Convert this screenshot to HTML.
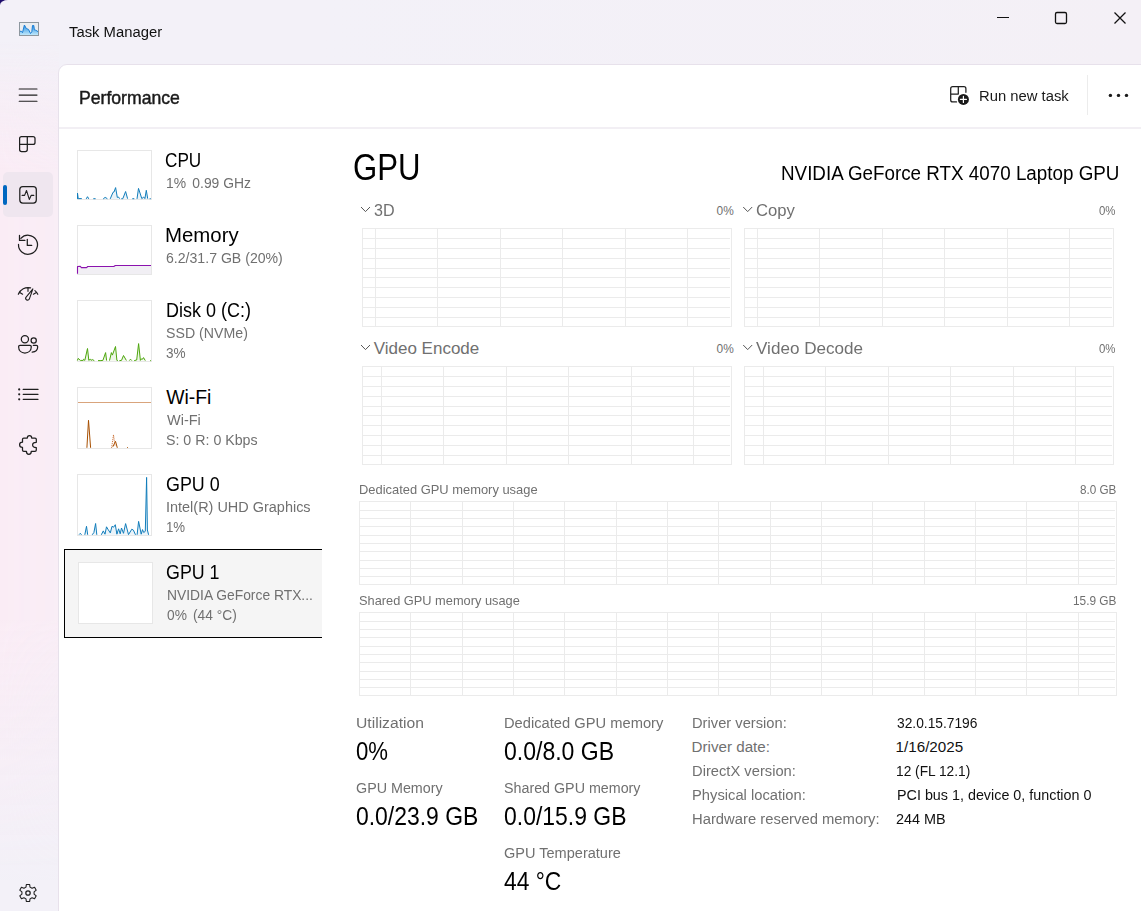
<!DOCTYPE html>
<html lang="en">
<head>
<meta charset="utf-8">
<title>Task Manager</title>
<style>
html,body{margin:0;padding:0}
body{width:1141px;height:911px;overflow:hidden;position:relative;background:#1d0b6b;font-family:'Liberation Sans',sans-serif}
#win{position:absolute;left:0;top:0;width:1141px;height:911px;overflow:hidden;border-top-left-radius:8px 5px;background:linear-gradient(90deg,#f3f1f8 0,#f3f1f8 320px,#f4f0f6 1141px)}
#nav{position:absolute;left:0;top:0;width:59px;height:911px;background:linear-gradient(180deg,rgba(250,236,245,0) 40px,rgba(250,236,245,.55) 100px,#faecf5 170px,#faecf5 620px,rgba(250,236,245,.5) 760px,rgba(250,236,245,0) 880px);-webkit-mask-image:linear-gradient(90deg,#000 0,rgba(0,0,0,.8) 100%);mask-image:linear-gradient(90deg,#000 0,rgba(0,0,0,.8) 100%)}
#panel{position:absolute;left:58px;top:64px;width:1090px;height:860px;box-sizing:border-box;background:#fff;border:1px solid #e7e1eb;border-top-left-radius:9px}
#hdrline{position:absolute;left:59px;top:127px;width:1082px;height:2px;background:#f2eff4}
.t{position:absolute;white-space:pre;line-height:1;transform-origin:0 0}
.g{position:absolute;display:block}
svg{position:absolute;display:block;overflow:visible}
.ic{fill:none;stroke:#1f1f1f;stroke-width:1.25;stroke-linecap:round;stroke-linejoin:round}
#navsel{position:absolute;left:3px;top:172px;width:50px;height:45px;border-radius:5px;background:#efe6ef}
#pill{position:absolute;left:3px;top:185px;width:4px;height:20px;border-radius:2px;background:#0067c0}
.th{position:absolute;box-sizing:border-box;border:1px solid #e7e7e7;background:#fff}
#sel{position:absolute;left:64px;top:549px;width:258px;height:89px;box-sizing:border-box;background:#f5f5f5;border:1px solid #000;border-right:none}
#sep{position:absolute;left:1087px;top:75px;width:1px;height:40px;background:#ececec}
</style>
</head>
<body>
<div id="win">
<div id="nav"></div>
<div id="panel"></div>
<div id="hdrline"></div>
<div id="navsel"></div>
<div id="pill"></div>
<div id="sel"></div>
<div id="sep"></div>

<!-- thumbnails -->
<div class="th" style="left:77px;top:150px;width:75px;height:50px"></div>
<div class="th" style="left:77px;top:225px;width:75px;height:50px"></div>
<div class="th" style="left:77px;top:300px;width:75px;height:62px"></div>
<div class="th" style="left:77px;top:387px;width:75px;height:62px"></div>
<div class="th" style="left:77px;top:474px;width:75px;height:62px"></div>
<div class="th" style="left:78px;top:562px;width:75px;height:62px"></div>

<svg class="g" style="left:362px;top:228px" width="370" height="99" shape-rendering="crispEdges"><g fill="#ebebeb"><rect x="0" y="0" width="370" height="1"/><rect x="0" y="98" width="370" height="1"/><rect x="0" y="0" width="1" height="99"/><rect x="369" y="0" width="1" height="99"/><rect x="13" y="0" width="1" height="99"/><rect x="75" y="0" width="1" height="99"/><rect x="138" y="0" width="1" height="99"/><rect x="200" y="0" width="1" height="99"/><rect x="263" y="0" width="1" height="99"/><rect x="325" y="0" width="1" height="99"/><rect x="0" y="10" width="368" height="1"/><rect x="0" y="20" width="368" height="1"/><rect x="0" y="30" width="368" height="1"/><rect x="0" y="40" width="368" height="1"/><rect x="0" y="49" width="368" height="1"/><rect x="0" y="59" width="368" height="1"/><rect x="0" y="69" width="368" height="1"/><rect x="0" y="79" width="368" height="1"/><rect x="0" y="89" width="368" height="1"/></g></svg>
<svg class="g" style="left:744px;top:228px" width="370" height="99" shape-rendering="crispEdges"><g fill="#ebebeb"><rect x="0" y="0" width="370" height="1"/><rect x="0" y="98" width="370" height="1"/><rect x="0" y="0" width="1" height="99"/><rect x="369" y="0" width="1" height="99"/><rect x="13" y="0" width="1" height="99"/><rect x="75" y="0" width="1" height="99"/><rect x="138" y="0" width="1" height="99"/><rect x="200" y="0" width="1" height="99"/><rect x="263" y="0" width="1" height="99"/><rect x="325" y="0" width="1" height="99"/><rect x="0" y="10" width="368" height="1"/><rect x="0" y="20" width="368" height="1"/><rect x="0" y="30" width="368" height="1"/><rect x="0" y="40" width="368" height="1"/><rect x="0" y="49" width="368" height="1"/><rect x="0" y="59" width="368" height="1"/><rect x="0" y="69" width="368" height="1"/><rect x="0" y="79" width="368" height="1"/><rect x="0" y="89" width="368" height="1"/></g></svg>
<svg class="g" style="left:362px;top:366px" width="370" height="99" shape-rendering="crispEdges"><g fill="#ebebeb"><rect x="0" y="0" width="370" height="1"/><rect x="0" y="98" width="370" height="1"/><rect x="0" y="0" width="1" height="99"/><rect x="369" y="0" width="1" height="99"/><rect x="19" y="0" width="1" height="99"/><rect x="81" y="0" width="1" height="99"/><rect x="144" y="0" width="1" height="99"/><rect x="206" y="0" width="1" height="99"/><rect x="269" y="0" width="1" height="99"/><rect x="331" y="0" width="1" height="99"/><rect x="0" y="10" width="368" height="1"/><rect x="0" y="20" width="368" height="1"/><rect x="0" y="30" width="368" height="1"/><rect x="0" y="40" width="368" height="1"/><rect x="0" y="49" width="368" height="1"/><rect x="0" y="59" width="368" height="1"/><rect x="0" y="69" width="368" height="1"/><rect x="0" y="79" width="368" height="1"/><rect x="0" y="89" width="368" height="1"/></g></svg>
<svg class="g" style="left:744px;top:366px" width="370" height="99" shape-rendering="crispEdges"><g fill="#ebebeb"><rect x="0" y="0" width="370" height="1"/><rect x="0" y="98" width="370" height="1"/><rect x="0" y="0" width="1" height="99"/><rect x="369" y="0" width="1" height="99"/><rect x="19" y="0" width="1" height="99"/><rect x="81" y="0" width="1" height="99"/><rect x="144" y="0" width="1" height="99"/><rect x="206" y="0" width="1" height="99"/><rect x="269" y="0" width="1" height="99"/><rect x="331" y="0" width="1" height="99"/><rect x="0" y="10" width="368" height="1"/><rect x="0" y="20" width="368" height="1"/><rect x="0" y="30" width="368" height="1"/><rect x="0" y="40" width="368" height="1"/><rect x="0" y="49" width="368" height="1"/><rect x="0" y="59" width="368" height="1"/><rect x="0" y="69" width="368" height="1"/><rect x="0" y="79" width="368" height="1"/><rect x="0" y="89" width="368" height="1"/></g></svg>
<svg class="g" style="left:359px;top:501px" width="758" height="84" shape-rendering="crispEdges"><g fill="#ebebeb"><rect x="0" y="0" width="758" height="1"/><rect x="0" y="83" width="758" height="1"/><rect x="0" y="0" width="1" height="84"/><rect x="757" y="0" width="1" height="84"/><rect x="51" y="0" width="1" height="84"/><rect x="103" y="0" width="1" height="84"/><rect x="154" y="0" width="1" height="84"/><rect x="205" y="0" width="1" height="84"/><rect x="257" y="0" width="1" height="84"/><rect x="308" y="0" width="1" height="84"/><rect x="359" y="0" width="1" height="84"/><rect x="411" y="0" width="1" height="84"/><rect x="462" y="0" width="1" height="84"/><rect x="513" y="0" width="1" height="84"/><rect x="565" y="0" width="1" height="84"/><rect x="616" y="0" width="1" height="84"/><rect x="667" y="0" width="1" height="84"/><rect x="719" y="0" width="1" height="84"/><rect x="0" y="9" width="756" height="1"/><rect x="0" y="17" width="756" height="1"/><rect x="0" y="25" width="756" height="1"/><rect x="0" y="34" width="756" height="1"/><rect x="0" y="42" width="756" height="1"/><rect x="0" y="50" width="756" height="1"/><rect x="0" y="59" width="756" height="1"/><rect x="0" y="67" width="756" height="1"/><rect x="0" y="75" width="756" height="1"/></g></svg>
<svg class="g" style="left:359px;top:612px" width="758" height="84" shape-rendering="crispEdges"><g fill="#ebebeb"><rect x="0" y="0" width="758" height="1"/><rect x="0" y="83" width="758" height="1"/><rect x="0" y="0" width="1" height="84"/><rect x="757" y="0" width="1" height="84"/><rect x="51" y="0" width="1" height="84"/><rect x="103" y="0" width="1" height="84"/><rect x="154" y="0" width="1" height="84"/><rect x="205" y="0" width="1" height="84"/><rect x="257" y="0" width="1" height="84"/><rect x="308" y="0" width="1" height="84"/><rect x="359" y="0" width="1" height="84"/><rect x="411" y="0" width="1" height="84"/><rect x="462" y="0" width="1" height="84"/><rect x="513" y="0" width="1" height="84"/><rect x="565" y="0" width="1" height="84"/><rect x="616" y="0" width="1" height="84"/><rect x="667" y="0" width="1" height="84"/><rect x="719" y="0" width="1" height="84"/><rect x="0" y="9" width="756" height="1"/><rect x="0" y="17" width="756" height="1"/><rect x="0" y="25" width="756" height="1"/><rect x="0" y="34" width="756" height="1"/><rect x="0" y="42" width="756" height="1"/><rect x="0" y="50" width="756" height="1"/><rect x="0" y="59" width="756" height="1"/><rect x="0" y="67" width="756" height="1"/><rect x="0" y="75" width="756" height="1"/></g></svg>

<!-- full-page overlay svg for icons and sparklines -->
<svg width="1141" height="911" viewBox="0 0 1141 911" style="left:0;top:0">
 <!-- app icon -->
 <defs>
  <linearGradient id="ig" x1="0" y1="0" x2="0" y2="1"><stop offset="0" stop-color="#2a8fe0"/><stop offset="1" stop-color="#bfe8fc"/></linearGradient>
 </defs>
 <rect x="19.5" y="22.5" width="19" height="13" fill="#e9edf0" stroke="#8d979f" stroke-width="1"/>
 <path d="M20 31.3 L21.4 31.3 L22.5 32.7 L24.4 25 L26.3 28.5 L28.5 29.4 L30.5 33.5 L31.8 31.8 L32.5 25.5 L33.8 25.5 L34.4 29.9 L35.7 30.2 L38 31.6 L38 35 L20 35Z" fill="url(#ig)"/>
 <path d="M20 31.3 L21.4 31.3 L22.5 32.7 L24.4 25 L26.3 28.5 L28.5 29.4 L30.5 33.5 L31.8 31.8 L32.5 25.5 L33.8 25.5 L34.4 29.9 L35.7 30.2 L38 31.6" fill="none" stroke="#1b7fd6" stroke-width="1"/>

 <!-- window controls -->
 <g fill="none" stroke="#111" stroke-width="1">
  <path d="M997 17.5 H1009"/>
  <rect x="1055.5" y="12.5" width="11" height="11" rx="1.5" stroke-width="1.3"/>
  <path d="M1114.5 12.5 L1125.5 23.5 M1125.5 12.5 L1114.5 23.5" stroke-width="1.25"/>
 </g>

 <!-- nav icons -->
 <g class="ic">
  <!-- hamburger -->
  <path d="M19.2 89 H37 M19.2 95.1 H37 M19.2 101.2 H37" stroke-width="1.15"/>
  <!-- processes -->
  <path d="M21.6 136.6 H33 a2 2 0 0 1 2 2 V142.4 a2 2 0 0 1 -2 2 H27.3 V149.6 a2 2 0 0 1 -2 2 H21.6 a2 2 0 0 1 -2 -2 V138.6 a2 2 0 0 1 2 -2 Z M27.3 136.6 V144.4 M19.6 144.4 H27.3"/>
  <!-- performance -->
  <rect x="19.8" y="186.6" width="16.5" height="16.5" rx="3"/>
  <path d="M22.1 195.4 H24.6 L26.5 190.5 L29.3 199.4 L31.1 195.4 H33.8" stroke-width="1.1"/>
  <!-- history -->
  <path d="M20.9 238.4 A9.5 9.5 0 1 1 18.5 244.4 M19.5 235.3 V240.4 H24.9 M27.3 239.3 V245.4 H31.7"/>
  <!-- startup gauge -->
  <path d="M18.3 294.3 A10.4 10.4 0 0 1 30.6 287.9 M34.9 290.6 A10.4 10.4 0 0 1 37.8 294.3 M19.8 292.4 L22.6 294.2 M28 288 V291.3 M36.4 292.4 L33.4 294.2" stroke-width="1.15"/>
  <path d="M32.9 288.9 L25.9 297.3 A1.9 1.9 0 0 0 29.3 299.1 Z" stroke-width="1.1"/>
  <!-- users -->
  <circle cx="24.9" cy="339.3" r="3.6"/>
  <circle cx="33.7" cy="340.4" r="2.6"/>
  <path d="M20 345.4 H29.9 Q31.3 345.4 31.3 346.8 C31.3 350.8 28.3 353 24.9 353 S18.6 350.8 18.6 346.8 Q18.6 345.4 20 345.4 Z M33.3 345.4 H36.3 Q37.7 345.4 37.7 346.8 C37.7 350 35.3 352 32.2 352.2"/>
  <!-- details -->
  <path d="M23.2 389.4 H38 M23.2 394.3 H38 M23.2 399.3 H38"/>
  <!-- services puzzle -->
  <path d="M23.8 438 H27.3 C27.3 436.2 28.3 435.6 29.5 435.6 C30.7 435.6 31.7 436.2 31.7 438 H35 a1.3 1.3 0 0 1 1.3 1.3 V442.3 C34.3 442.3 32.6 443 32.6 445 C32.6 447 34.3 447.5 36.3 447.5 V450 a1.3 1.3 0 0 1 -1.3 1.3 H31.3 C31.3 453 30.3 454.4 28.9 454.4 C27.5 454.4 26.4 453 26.4 451.3 H23.8 a1.3 1.3 0 0 1 -1.3 -1.3 V447.4 C20.8 447.4 19.6 446.3 19.6 444.8 C19.6 443.3 20.8 442.2 22.5 442.2 V439.3 a1.3 1.3 0 0 1 1.3 -1.3 Z"/>
  <!-- settings -->
  <path d="M25.98 887.14 L26.34 884.46 L29.66 884.46 L30.02 887.14 L32.07 888.32 L34.57 887.29 L36.23 890.17 L34.09 891.82 L34.09 894.18 L36.23 895.83 L34.57 898.71 L32.07 897.68 L30.02 898.86 L29.66 901.54 L26.34 901.54 L25.98 898.86 L23.93 897.68 L21.43 898.71 L19.77 895.83 L21.91 894.18 L21.91 891.82 L19.77 890.17 L21.43 887.29 L23.93 888.32Z" stroke-width="1.1"/>
  <circle cx="28" cy="893" r="2.2"/>
 </g>
 <g fill="#1f1f1f"><circle cx="19.2" cy="389.4" r="1.1"/><circle cx="19.2" cy="394.3" r="1.1"/><circle cx="19.2" cy="399.3" r="1.1"/></g>

 <!-- run new task icon -->
 <g class="ic" stroke-width="1.2">
  <path d="M965.9 92.3 V88.7 a2 2 0 0 0 -2 -2 H952.7 a2 2 0 0 0 -2 2 V99.9 a2 2 0 0 0 2 2 H956.5 M958.3 86.7 V94.1 H950.7"/>
 </g>
 <circle cx="963.4" cy="99.4" r="5.5" fill="#1a1a1a"/>
 <path d="M960.4 99.4 H966.4 M963.4 96.4 V102.4" stroke="#fff" stroke-width="1.2" fill="none" stroke-linecap="round"/>
 <!-- more dots -->
 <g fill="#1a1a1a"><circle cx="1110.4" cy="95.4" r="1.7"/><circle cx="1118.5" cy="95.4" r="1.7"/><circle cx="1126.5" cy="95.4" r="1.7"/></g>

 <!-- chevrons -->
 <g fill="none" stroke="#555" stroke-width="1" stroke-linecap="round" stroke-linejoin="round">
  <path d="M361.3 207.3 L365.5 211.6 L369.7 207.3"/>
  <path d="M743.5 207.3 L747.7 211.6 L751.9 207.3"/>
  <path d="M361.3 345.3 L365.5 349.6 L369.7 345.3"/>
  <path d="M743.5 345.3 L747.7 349.6 L751.9 345.3"/>
 </g>

 <!-- CPU sparkline -->
 <g fill="none" stroke-width="1" stroke-linejoin="round">
  <path d="M77.5 198.9 L77.5 193.1 L78.2 198.6 L81.8 198.6 M86.2 198.9 L87.5 196.7 L88.8 198.9 M93.3 198.7 H95.6 M103.2 198.9 L105.1 197.4 L107.4 198.7 M110.2 198.9 L113 192.3 L114 192 L115.6 187.6 L117.3 197.4 L118.5 197 L119.7 198.7 M121.3 198.7 H122.8 L125.6 191.5 L127.6 198.7 M132.3 198.7 H134.3 M137 198.9 L138.5 188.4 L141.8 198.6 L143.7 197 L144.9 198.6 L146.3 190.3 L147.7 198.7 M149.6 198.7 H150.8" stroke="#117dbb" fill="#117dbb" fill-opacity=".09"/>
  <!-- Memory -->
  <path d="M77.5 266.5 L80.3 266.4 L81.4 267.6 L86.6 267.6 L87.7 266.5 L113.8 266.5 L115.3 265.5 L151 265.5 L151 274 L77.5 274 Z" fill="#f1eff4" stroke="none"/>
  <path d="M77.5 273.8 L77.5 266.5 L80.3 266.4 L81.4 267.6 L86.6 267.6 L87.7 266.5 L113.8 266.5 L115.3 265.5 L151 265.5" stroke="#8b12ae" stroke-width="1.1"/>
  <!-- Disk -->
  <path d="M77.4 360.5 L78.2 358.4 L80.3 360.4 L83.2 360.4 L83.6 359.3 L84.8 360.4 L87.5 348.5 L88.8 360.4 L90.2 359.2 L91 360.4 L92.2 359.6 L94.3 360.6 M98 360.6 H100.9 L102.9 360.4 L105.6 352.6 L106.6 360.6 M109.5 360.6 L111.4 352.6 L112.4 355.1 L115.5 346.5 L116.9 360.4 L117.8 360.6 M119.4 360.6 L121.5 360.4 L123.5 355.5 L126.4 360.5 M129.3 360.6 L130.5 359.2 L131.8 360.6 M134.2 360.6 L136.7 360 L138.6 343.6 L140.4 360.4 L141.6 358.8 L142.5 359.2 L143.5 357.6 L145.3 360.6 M150.2 360.6 H151" stroke="#4da60c" fill="#4da60c" fill-opacity=".1"/>
  <!-- Wi-Fi -->
  <path d="M78 402.5 H151" stroke="#d9a47c"/>
  <path d="M86.9 447.8 L88.5 420.3 L90.6 447.8 M112.8 446.8 L115.5 441.3 L117.3 447.8 M127 447.5 H127.8" stroke="#a74f01"/>
  <path d="M111.6 447.8 L113.5 434.8 L115 446" stroke="#c8682a" stroke-dasharray="1 1"/>
  <!-- GPU 0 -->
  <path d="M79.1 534.6 L80.3 533.3 L81.5 534.8 M84.8 534.8 L86.5 526.3 L87.7 534.8 M92.2 534.8 L93.9 532.5 L95.6 523.5 L96.8 534.8 M101.3 534.8 L103.3 530.9 L105 534.2 L106.5 526.8 L107.9 529.2 L110.3 532.9 L112 526.3 L113.6 527.2 L115.3 524.7 L116.9 534.2 L118.6 528.8 L120.2 533.8 L121.5 528 L123.5 533.3 L125.6 523.6 L128.5 534.6 L131.8 529.2 L133.4 530.1 L135.5 534.8 M137.1 534.8 L138.6 521.4 L141.2 534.2 L142.5 529.6 L143.7 532.5 L145.3 531.3 L146.6 477.4 L147.4 530 L148.6 534.8" stroke="#117dbb" fill="#117dbb" fill-opacity=".09"/>
 </g>
</svg>

<span class="t" style="left:68.7px;top:24.0px;font-size:15.5px;color:#111;transform:scaleX(0.956);">Task Manager</span>
<span class="t" style="left:78.5px;top:89.8px;font-size:17.9px;color:#1a1a1a;-webkit-text-stroke:0.45px #1a1a1a;transform:scaleX(0.985);">Performance</span>
<span class="t" style="left:978.7px;top:87.7px;font-size:15.5px;color:#1a1a1a;transform:scaleX(0.955);">Run new task</span>
<span class="t" style="left:164.5px;top:150.6px;font-size:19.4px;color:#000;transform:scaleX(0.885);">CPU</span>
<span class="t" style="left:165.7px;top:175.0px;font-size:15.3px;color:#707070;transform:scaleX(0.908);">1%<span style="letter-spacing:2.6px"> </span>0.99 GHz</span>
<span class="t" style="left:164.6px;top:225.6px;font-size:19.4px;color:#000;transform:scaleX(1.052);">Memory</span>
<span class="t" style="left:165.6px;top:250.0px;font-size:15.3px;color:#707070;transform:scaleX(0.922);">6.2/31.7 GB (20%)</span>
<span class="t" style="left:165.5px;top:300.6px;font-size:19.4px;color:#000;transform:scaleX(0.927);">Disk 0 (C:)</span>
<span class="t" style="left:165.6px;top:325.0px;font-size:15.3px;color:#707070;transform:scaleX(0.926);">SSD (NVMe)</span>
<span class="t" style="left:165.7px;top:345.0px;font-size:15.3px;color:#707070;transform:scaleX(0.889);">3%</span>
<span class="t" style="left:166.2px;top:387.6px;font-size:19.4px;color:#000;">Wi-Fi</span>
<span class="t" style="left:166.5px;top:412.0px;font-size:15.3px;color:#707070;transform:scaleX(0.947);">Wi-Fi</span>
<span class="t" style="left:165.6px;top:432.0px;font-size:15.3px;color:#707070;transform:scaleX(0.929);">S: 0 R: 0 Kbps</span>
<span class="t" style="left:165.5px;top:474.6px;font-size:19.4px;color:#000;transform:scaleX(0.923);">GPU 0</span>
<span class="t" style="left:165.6px;top:499.0px;font-size:15.3px;color:#707070;transform:scaleX(0.945);">Intel(R) UHD Graphics</span>
<span class="t" style="left:165.6px;top:519.0px;font-size:15.3px;color:#707070;transform:scaleX(0.865);">1%</span>
<span class="t" style="left:165.5px;top:562.6px;font-size:19.4px;color:#000;transform:scaleX(0.920);">GPU 1</span>
<span class="t" style="left:166.7px;top:587.0px;font-size:15.3px;color:#707070;transform:scaleX(0.905);">NVIDIA GeForce RTX...</span>
<span class="t" style="left:166.5px;top:607.0px;font-size:15.3px;color:#707070;transform:scaleX(0.899);">0%<span style="letter-spacing:2.6px"> </span>(44 °C)</span>
<span class="t" style="left:352.6px;top:148.7px;font-size:37px;color:#000;transform:scaleX(0.842);">GPU</span>
<span class="t" style="left:780.5px;top:164.4px;font-size:19.6px;color:#000;transform:scaleX(0.960);">NVIDIA GeForce RTX 4070 Laptop GPU</span>
<span class="t" style="left:373.7px;top:201.6px;font-size:17px;color:#707070;transform:scaleX(0.947);">3D</span>
<span class="t" style="left:716.6px;top:205.5px;font-size:11.9px;color:#707070;">0%</span>
<span class="t" style="left:755.7px;top:201.7px;font-size:17px;color:#707070;transform:scaleX(0.981);">Copy</span>
<span class="t" style="left:1098.7px;top:205.5px;font-size:11.9px;color:#707070;transform:scaleX(0.963);">0%</span>
<span class="t" style="left:373.7px;top:339.6px;font-size:17px;color:#707070;">Video Encode</span>
<span class="t" style="left:716.6px;top:343.5px;font-size:11.9px;color:#707070;">0%</span>
<span class="t" style="left:755.7px;top:339.6px;font-size:17px;color:#707070;transform:scaleX(1.005);">Video Decode</span>
<span class="t" style="left:1098.7px;top:343.5px;font-size:11.9px;color:#707070;transform:scaleX(0.963);">0%</span>
<span class="t" style="left:358.6px;top:482.6px;font-size:13.5px;color:#707070;transform:scaleX(0.956);">Dedicated GPU memory usage</span>
<span class="t" style="left:1079.6px;top:482.6px;font-size:13.5px;color:#707070;transform:scaleX(0.866);">8.0 GB</span>
<span class="t" style="left:358.7px;top:593.6px;font-size:13.5px;color:#707070;transform:scaleX(0.948);">Shared GPU memory usage</span>
<span class="t" style="left:1072.7px;top:593.6px;font-size:13.5px;color:#707070;transform:scaleX(0.878);">15.9 GB</span>
<span class="t" style="left:355.6px;top:715.1px;font-size:15.2px;color:#707070;transform:scaleX(1.032);">Utilization</span>
<span class="t" style="left:355.7px;top:738.7px;font-size:25.2px;color:#000;transform:scaleX(0.880);">0%</span>
<span class="t" style="left:355.7px;top:780.1px;font-size:15.2px;color:#707070;transform:scaleX(0.942);">GPU Memory</span>
<span class="t" style="left:355.7px;top:803.9px;font-size:25.2px;color:#000;transform:scaleX(0.910);">0.0/23.9 GB</span>
<span class="t" style="left:503.7px;top:715.1px;font-size:15.2px;color:#707070;transform:scaleX(0.968);">Dedicated GPU memory</span>
<span class="t" style="left:503.7px;top:738.7px;font-size:25.2px;color:#000;transform:scaleX(0.914);">0.0/8.0 GB</span>
<span class="t" style="left:503.7px;top:780.1px;font-size:15.2px;color:#707070;transform:scaleX(0.940);">Shared GPU memory</span>
<span class="t" style="left:503.7px;top:803.9px;font-size:25.2px;color:#000;transform:scaleX(0.911);">0.0/15.9 GB</span>
<span class="t" style="left:503.7px;top:845.1px;font-size:15.2px;color:#707070;transform:scaleX(0.957);">GPU Temperature</span>
<span class="t" style="left:503.7px;top:868.7px;font-size:25.2px;color:#000;transform:scaleX(0.905);">44 °C</span>
<span class="t" style="left:691.6px;top:715.1px;font-size:15.2px;color:#707070;transform:scaleX(0.968);">Driver version:</span>
<span class="t" style="left:691.5px;top:739.1px;font-size:15.2px;color:#707070;">Driver date:</span>
<span class="t" style="left:691.6px;top:763.1px;font-size:15.2px;color:#707070;transform:scaleX(0.969);">DirectX version:</span>
<span class="t" style="left:691.6px;top:787.1px;font-size:15.2px;color:#707070;transform:scaleX(0.970);">Physical location:</span>
<span class="t" style="left:691.6px;top:811.1px;font-size:15.2px;color:#707070;transform:scaleX(0.975);">Hardware reserved memory:</span>
<span class="t" style="left:896.5px;top:715.1px;font-size:15.2px;color:#111;transform:scaleX(0.907);">32.0.15.7196</span>
<span class="t" style="left:895.6px;top:739.1px;font-size:15.2px;color:#111;">1/16/2025</span>
<span class="t" style="left:895.6px;top:763.1px;font-size:15.2px;color:#111;transform:scaleX(0.904);">12 (FL 12.1)</span>
<span class="t" style="left:896.7px;top:787.1px;font-size:15.2px;color:#111;transform:scaleX(0.944);">PCI bus 1, device 0, function 0</span>
<span class="t" style="left:895.6px;top:811.1px;font-size:15.2px;color:#111;transform:scaleX(0.950);">244 MB</span>
</div>
</body>
</html>
